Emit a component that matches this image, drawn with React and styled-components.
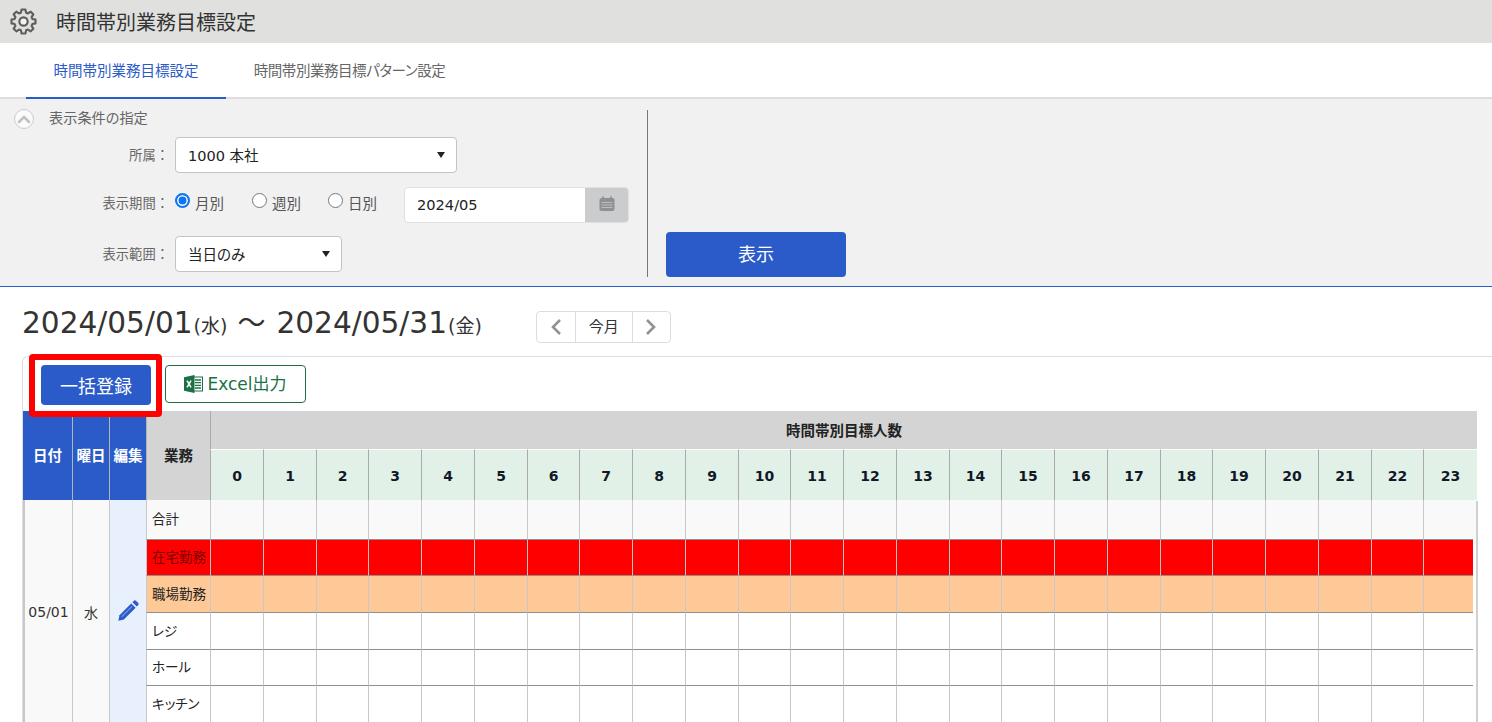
import React from "react";
import styled, { createGlobalStyle } from "styled-components";

const SANS = `"DejaVu Sans", "Noto Sans CJK JP", sans-serif`;
const JP = `"Noto Sans CJK JP", "DejaVu Sans", sans-serif`;

const Global = createGlobalStyle`
  html, body { margin: 0; padding: 0; background: #fff; height: 722px; overflow: hidden; }
  body { font-family: ${SANS}; color: #222; }
  * { box-sizing: border-box; }
`;

const Page = styled.div`width: 1492px; height: 722px; overflow: hidden;`;
const TitleBar = styled.header`
  height: 43px; background: #e0e0de; display: flex; align-items: center; padding-left: 10px; gap: 19px;
`;
const Title = styled.h1`margin: 0; font: 400 20px ${JP}; color: #333;`;
const Tabs = styled.nav`
  height: 56px; display: flex; padding-left: 26px; border-bottom: 2px solid #dedcdc; background: #fff;
`;
const Tab = styled.div`
  width: ${p => p.$w}px; height: 56px; display: flex; align-items: center; justify-content: center;
  padding-bottom: 1px; font: 400 14.5px ${JP}; font-feature-settings: "palt"; letter-spacing: ${p => p.$track || 0}px;
  color: ${p => (p.$active ? "#2a5bc8" : "#666")};
  border-bottom: 2px solid ${p => (p.$active ? "#2a5bc8" : "transparent")};
`;
const Filter = styled.section`
  height: 188px; background: #f1f1f1; border-bottom: 1.5px solid #2a5bc8; display: flex; padding-top: 11px;
`;
const FilterLeft = styled.div`
  width: 648px; height: 167px; border-right: 1px solid #777; padding-left: 14px;
`;
const Legend = styled.div`display: flex; align-items: center; gap: 15px; height: 18px; font: 400 14.2px ${JP}; font-feature-settings: "palt"; color: #666;`;
const LegendText = styled.span`padding-bottom: 5px;`;
const Collapse = styled.span`
  width: 20px; height: 20px; border-radius: 50%; border: 1px solid #ccc; background: #fafafa;
  display: flex; align-items: center; justify-content: center;
`;
const Row = styled.div`
  display: flex; align-items: center; margin-top: ${p => p.$mt}px;
`;
const Label = styled.span`
  width: 161px; padding-right: 6px; padding-bottom: ${p => p.$lift || 0}px; text-align: right; font: 400 13.3px ${JP}; color: #666;
`;
const Select = styled.div`
  width: ${p => p.$w}px; height: 36px; background: #fff; border: 1px solid #c4c4c4; border-radius: 4px;
  display: flex; align-items: center; justify-content: space-between; padding: 0 11px 1px 12px;
  font: 400 14.5px ${SANS}; font-feature-settings: "palt"; color: #222;
`;
const Caret = styled.i`
  width: 0; height: 0; border-left: 4.5px solid transparent; border-right: 4.5px solid transparent;
  border-top: 6px solid #222;
`;
const Radio = styled.label`
  display: flex; align-items: center; gap: 5px; width: ${p => p.$w}px; padding-bottom: 6px; font: 400 14.5px ${JP}; color: #555;
`;
const RadioDot = styled.span`
  width: 15px; height: 15px; border-radius: 50%; flex: none;
  border: ${p => (p.$on ? "2px solid #0f75f0" : "1px solid #777")};
  box-shadow: ${p => (p.$on ? "inset 0 0 0 1.5px #fff" : "none")};
  background: ${p => (p.$on ? "#0f75f0" : "#fff")};
  margin-top: -3px;
`;
const DateField = styled.div`
  width: 225px; height: 36px; display: flex; border: 1px solid #e0e0e0; border-radius: 4px; overflow: hidden; background: #fff;
`;
const DateText = styled.span`flex: 1; padding: 0 0 1px 12px; display: flex; align-items: center; font: 400 14.6px ${SANS}; color: #222;`;
const DateBtn = styled.span`width: 43px; padding-bottom: 4px; background: #cbcccd; display: flex; align-items: center; justify-content: center;`;
const FilterRight = styled.div`padding: 122px 0 0 18px;`;
const ShowBtn = styled.button`
  width: 180px; height: 45px; border: 0; border-radius: 4px; background: #2a5bc8; color: #fff; font: 400 18px ${JP}; padding: 0 0 3px;
`;
const Period = styled.div`display: flex; align-items: center; height: 69px; padding-left: 22px; padding-top: 3px;`;
const PeriodText = styled.div`font: 400 29.6px ${SANS}; color: #333; white-space: nowrap; margin-top: -4px;`;
const Week = styled.small`font: 400 19px ${SANS}; color: #333; margin-left: 1px;`;
const Wave = styled.span`font: 400 28px ${JP}; margin: 0 11px 0 10px;`;
const Pager = styled.div`
  margin: 8px 0 0 54px; height: 32px; width: 135px; display: flex; border: 1px solid #ddd; border-radius: 4px; background: #fff;
`;
const PagerCell = styled.span`
  flex: ${p => (p.$grow ? "1" : "0 0 38px")}; display: flex; align-items: center; justify-content: center;
  padding-bottom: ${p => (p.$grow ? 3 : 0)}px; font: 400 15px ${JP}; color: #333;
  & + & { border-left: 1px solid #ddd; }
`;
const Card = styled.div`
  position: relative; margin-left: 22px; border-top: 1px solid #ddd; border-left: 1px solid #ddd; border-top-left-radius: 6px;
`;
const Toolbar = styled.div`display: flex; gap: 14px; height: 54px; padding: 8px 0 0 18px;`;
const PrimaryBtn = styled.button`
  width: 110px; height: 40px; border: 0; border-radius: 4px; background: #2a5bc8; color: #fff; font: 400 18px ${JP}; padding: 0;
`;
const ExcelBtn = styled.button`
  width: 141px; height: 38px; border: 1px solid #1d7044; border-radius: 4px; background: #fff; color: #1d7044;
  font: 400 17px ${SANS}; display: flex; align-items: center; justify-content: center; gap: 4px; padding: 0 0 3px;
`;
const ExcelGlyph = styled.span`display: flex; margin-top: 3px;`;
const Highlight = styled.div`
  position: absolute; left: 6px; top: -3px; width: 133px; height: 63px; border: 6.5px solid #f00; border-radius: 4px; pointer-events: none; z-index: 2;
`;
const Table = styled.table`
  table-layout: fixed; border-collapse: separate; border-spacing: 0; width: 1454px;
  font: 400 13px ${JP};
`;
const Th = styled.th`
  padding: 0 0 2px; font: 700 14.5px ${JP}; text-align: center; vertical-align: middle;
  background: ${p => p.$bg}; color: ${p => p.$c || "#222"};
  border-left: ${p => (p.$noLeft ? "0" : `1px solid ${p.$line || "#b4b4b4"}`)};
`;
const HourTh = styled.th`
  padding: 1px 0 0; text-align: center; font: 700 14px ${SANS}; border-top: 1px solid #fff; color: #111827; height: 51px;
  background: #e2f1e8; border-left: 1px solid #aaa;
`;
const BodyCell = styled.td`
  padding: 0; background: ${p => p.$bg}; border-left: 1px solid #c8c8c8;
  border-top: 1px solid #8f8f8f;
`;
const Gutter = styled.td`padding: 0; background: #fff;`;
const TotalCell = styled.td`padding: 0; background: #f9f9f9; border-left: 1px solid #c8c8c8;`;
const WorkCell = styled.td`
  padding: 0 0 ${p => (p.$top ? 3 : 4)}px 5px; font: 400 13.5px ${JP}; font-feature-settings: "palt"; color: ${p => p.$c || "#222"}; white-space: nowrap; overflow: hidden;
  background: ${p => p.$bg}; border-left: 1px solid #c8c8c8;
  border-top: ${p => (p.$top ? "1px solid #8f8f8f" : "0")};
`;
const SideCell = styled.td`
  padding: 2px 0 0; text-align: center; background: ${p => p.$bg}; border-left: ${p => (p.$first ? "2px" : "1px")} solid #c8c8c8;
  font: 400 14px ${SANS}; color: #333;
`;
const TR = styled.tr`height: ${p => p.$h}px;`;
const ScrollEdge = styled.div`
  position: absolute; left: 1453px; top: 144px; width: 2px; height: 230px; background: #d0d0d0; z-index: 1;
`;

const gearPath = () => {
  const pts = [];
  const n = 8;
  for (let i = 0; i < n; i++) {
    const a = (i / n) * Math.PI * 2 - Math.PI / 2;
    const step = (Math.PI * 2) / n;
    const add = (r, off) => pts.push([12 + r * Math.cos(a + off), 12 + r * Math.sin(a + off)]);
    add(8.2, -step * 0.36);
    add(10.8, -step * 0.2);
    add(10.8, step * 0.2);
    add(8.2, step * 0.36);
  }
  return "M" + pts.map(p => p.map(v => v.toFixed(2)).join(" ")).join("L") + "Z";
};
const Gear = () => (
  <svg width="27" height="27" viewBox="0 0 24 24" fill="none" stroke="#5e5e5e" strokeWidth="1.9" strokeLinejoin="round">
    <path d={gearPath()} />
    <circle cx="12" cy="12" r="3.7" fill="#f2f2f0" />
  </svg>
);
const ChevronUp = () => (
  <svg width="14" height="10" viewBox="0 0 14 10"><path d="M2 8l5-5 5 5" fill="none" stroke="#c2c2c2" strokeWidth="2.6" strokeLinecap="round" strokeLinejoin="round" /></svg>
);
const Calendar = () => (
  <svg width="16" height="15" viewBox="0 0 16 15">
    <rect x="0.5" y="2" width="15" height="13" rx="2" fill="#8f9092" />
    <rect x="3" y="0.5" width="2" height="3" fill="#8f9092" />
    <rect x="11" y="0.5" width="2" height="3" fill="#8f9092" />
    <path d="M2.5 6.5h11M2.5 9h11M2.5 11.5h11" stroke="#bcbdbe" strokeWidth="1" />
  </svg>
);
const Chevron = ({ dir }) => (
  <svg width="12" height="18" viewBox="0 0 12 18">
    <path d={dir === "l" ? "M10 2L3 9l7 7" : "M2 2l7 7-7 7"} fill="none" stroke="#929292" strokeWidth="2.6" />
  </svg>
);
const ExcelIcon = () => (
  <svg width="19" height="18" viewBox="0 0 19 18">
    <rect x="8" y="2" width="10.5" height="14" fill="#fff" stroke="#1d7044" />
    <path d="M11 5h6M11 7.7h6M11 10.4h6M11 13h6" stroke="#1d7044" strokeWidth="1.3" />
    <path d="M0 2.2L10.5 0v18L0 15.8z" fill="#1d7044" />
    <path d="M3 5.7l4 6.6M7 5.7l-4 6.6" stroke="#fff" strokeWidth="1.5" />
  </svg>
);
const Pencil = () => (
  <svg width="22" height="22" viewBox="0 0 24 24">
    <path fill="#2a5bc8" d="M1.5 22.5l1.2-6 12.8-12.8 4.8 4.8L7.5 21.3z" />
    <path fill="#2a5bc8" d="M16.8 2.4l1.4-1.4c.8-.8 2-.8 2.7 0l2.1 2.1c.8.8.8 2 0 2.7l-1.4 1.4z" />
    <path d="M5 18.5L16.5 7" stroke="#7f9fe3" strokeWidth="1.1" fill="none" />
  </svg>
);

const hours = Array.from({ length: 24 }, (_, i) => i);
const GUTTER = 4;
const colW = i => Math.round((i + 1) * 52.75) - Math.round(i * 52.75);

const rows = [
  { name: "在宅勤務", h: 36, bg: "#ff0000", c: "#7a0000" },
  { name: "職場勤務", h: 37, bg: "#ffc997" },
  { name: "レジ", h: 37, bg: "#fff" },
  { name: "ホール", h: 36, bg: "#fff" },
  { name: "キッチン", h: 37, bg: "#fff" },
];

export default function App() {
  return (
    <Page>
      <Global />
      <TitleBar><Gear /><Title>時間帯別業務目標設定</Title></TitleBar>
      <Tabs>
        <Tab $w={200} $active>時間帯別業務目標設定</Tab>
        <Tab $w={247} $track={-0.45}>時間帯別業務目標パターン設定</Tab>
      </Tabs>
      <Filter>
        <FilterLeft>
          <Legend><Collapse><ChevronUp /></Collapse><LegendText>表示条件の指定</LegendText></Legend>
          <Row $mt={9}>
            <Label $lift={2}>所属：</Label>
            <Select $w={282}>1000 本社<Caret /></Select>
          </Row>
          <Row $mt={14}>
            <Label $lift={6}>表示期間：</Label>
            <Radio $w={77}><RadioDot $on />月別</Radio>
            <Radio $w={76}><RadioDot />週別</Radio>
            <Radio $w={76}><RadioDot />日別</Radio>
            <DateField><DateText>2024/05</DateText><DateBtn><Calendar /></DateBtn></DateField>
          </Row>
          <Row $mt={13}>
            <Label $lift={2}>表示範囲：</Label>
            <Select $w={167}>当日のみ<Caret /></Select>
          </Row>
        </FilterLeft>
        <FilterRight><ShowBtn>表示</ShowBtn></FilterRight>
      </Filter>
      <Period>
        <PeriodText>2024/05/01<Week>(水)</Week><Wave>〜</Wave>2024/05/31<Week>(金)</Week></PeriodText>
        <Pager>
          <PagerCell><Chevron dir="l" /></PagerCell>
          <PagerCell $grow>今月</PagerCell>
          <PagerCell><Chevron dir="r" /></PagerCell>
        </Pager>
      </Period>
      <Card>
        <Highlight />
        <Toolbar>
          <PrimaryBtn>一括登録</PrimaryBtn>
          <ExcelBtn><ExcelGlyph><ExcelIcon /></ExcelGlyph>Excel出力</ExcelBtn>
        </Toolbar>
        <ScrollEdge />
        <Table>
          <colgroup>
            <col style={{ width: 49 }} />
            <col style={{ width: 37 }} />
            <col style={{ width: 37 }} />
            <col style={{ width: 64 }} />
            {hours.map(i => <col key={i} style={{ width: colW(i) - (i === 23 ? GUTTER - 1 : 0) }} />)}
            <col style={{ width: GUTTER }} />
          </colgroup>
          <thead>
            <TR $h={38}>
              <Th rowSpan={2} $bg="#2a5bc8" $c="#fff" $noLeft>日付</Th>
              <Th rowSpan={2} $bg="#2a5bc8" $c="#fff">曜日</Th>
              <Th rowSpan={2} $bg="#2a5bc8" $c="#fff">編集</Th>
              <Th rowSpan={2} $bg="#d3d4d3">業務</Th>
              <Th colSpan={25} $bg="#d3d4d3" $line="#aaa">時間帯別目標人数</Th>
            </TR>
            <TR $h={51}>
              {hours.map(i => <HourTh key={i} colSpan={i === 23 ? 2 : 1}>{i}</HourTh>)}
            </TR>
          </thead>
          <tbody>
            <TR $h={39}>
              <SideCell rowSpan={6} $bg="#f9f9f9" $first>05/01</SideCell>
              <SideCell rowSpan={6} $bg="#f9f9f9">水</SideCell>
              <SideCell rowSpan={6} $bg="#e8f0fd"><Pencil /></SideCell>
              <WorkCell $bg="#f9f9f9">合計</WorkCell>
              {hours.map(i => <TotalCell key={i} colSpan={i === 23 ? 2 : 1} />)}
            </TR>
            {rows.map(r => (
              <TR key={r.name} $h={r.h}>
                <WorkCell $bg={r.bg} $c={r.c} $top>{r.name}</WorkCell>
                {hours.map(i => <BodyCell key={i} $bg={r.bg} />)}
                <Gutter />
              </TR>
            ))}
          </tbody>
        </Table>
      </Card>
    </Page>
  );
}
